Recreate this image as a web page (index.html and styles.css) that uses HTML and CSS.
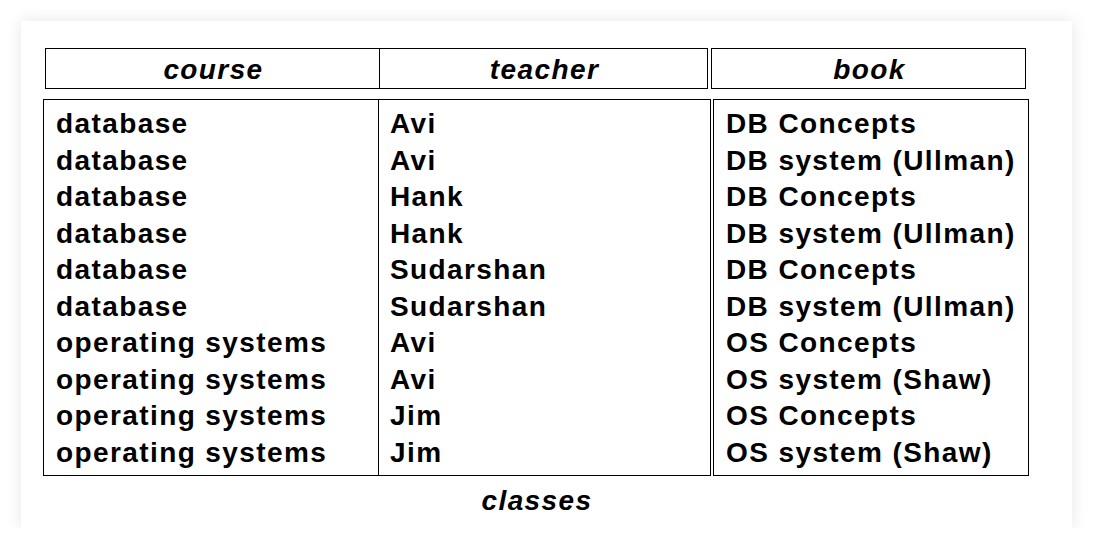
FILE: index.html
```html
<!DOCTYPE html>
<html>
<head>
<meta charset="utf-8">
<link rel="stylesheet" href="styles.css">
</head>
<body>
<div class="card">
  <div class="head-row">
    <div class="box head-pair">
      <div class="hcell hcourse">course</div>
      <div class="hcell hteacher">teacher</div>
    </div>
    <div class="box hcell hbook">book</div>
  </div>
  <div class="body-row">
    <div class="box body-pair">
      <div class="col ccourse">
        <div>database</div><div>database</div><div>database</div><div>database</div><div>database</div><div>database</div>
        <div>operating systems</div><div>operating systems</div><div>operating systems</div><div>operating systems</div>
      </div>
      <div class="col cteacher">
        <div>Avi</div><div>Avi</div><div>Hank</div><div>Hank</div><div>Sudarshan</div><div>Sudarshan</div>
        <div>Avi</div><div>Avi</div><div>Jim</div><div>Jim</div>
      </div>
    </div>
    <div class="box col cbook">
      <div>DB Concepts</div><div>DB system (Ullman)</div><div>DB Concepts</div><div>DB system (Ullman)</div><div>DB Concepts</div><div>DB system (Ullman)</div>
      <div>OS Concepts</div><div>OS system (Shaw)</div><div>OS Concepts</div><div>OS system (Shaw)</div>
    </div>
  </div>
  <div class="caption">classes</div>
</div>
</body>
</html>
```

FILE: styles.css
```css
html, body {
  margin: 0;
  padding: 0;
  background: #ffffff;
}
body {
  font-family: "Liberation Sans", Arial, sans-serif;
  font-weight: bold;
  color: #000;
  letter-spacing: 1.4px;
}
.card {
  margin: 21px 0 0 21px;
  width: 1051px;
  height: 507px;
  box-sizing: border-box;
  padding: 27px 0 0 22px;
  background: #fff;
  box-shadow: 0 0 16px rgba(0, 0, 0, 0.10);
}
.box {
  border: 1px solid #000;
  box-sizing: border-box;
}
.head-row {
  display: flex;
  gap: 3px;
  margin-left: 2px;
}
.head-pair {
  display: flex;
  width: 663px;
  height: 41px;
}
.hcell {
  box-sizing: border-box;
  font-style: italic;
  font-size: 28px;
  line-height: 37px;
  padding-top: 2px;
  padding-left: 2px;
  text-align: center;
}
.hcourse {
  width: 334px;
  border-right: 1px solid #000;
}
.hteacher {
  flex: 1;
}
.hbook {
  width: 315px;
  height: 41px;
}
.body-row {
  display: flex;
  gap: 2px;
  margin-top: 10px;
  width: 986px;
}
.body-pair {
  display: flex;
  width: 668px;
}
.col {
  font-size: 28px;
  line-height: 36.5px;
  padding: 6px 0 4px 12px;
  white-space: nowrap;
}
.ccourse {
  width: 335px;
  box-sizing: border-box;
  border-right: 1px solid #000;
}
.cteacher {
  flex: 1;
  padding-left: 11px;
}
.cbook {
  width: 316px;
  padding-left: 12px;
}
.caption {
  width: 986px;
  text-align: center;
  font-style: italic;
  font-size: 28px;
  line-height: 36px;
  margin-top: 7px;
  padding-left: 2px;
  box-sizing: border-box;
}
```
